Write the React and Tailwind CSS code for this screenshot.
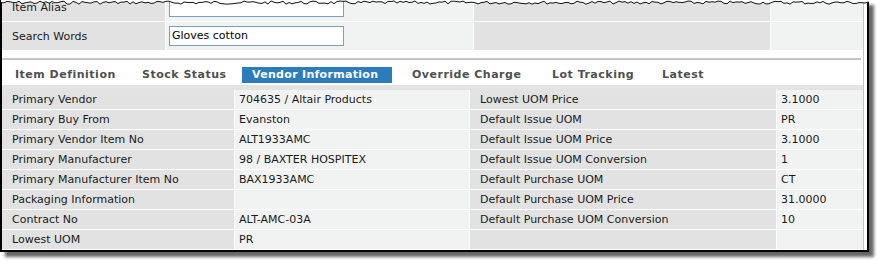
import React from 'react';

// Vendor Information tab of the item screen, clipped screenshot style
const LEFT_ROWS = [
  ['Primary Vendor', '704635 / Altair Products'],
  ['Primary Buy From', 'Evanston'],
  ['Primary Vendor Item No', 'ALT1933AMC'],
  ['Primary Manufacturer', '98 / BAXTER HOSPITEX'],
  ['Primary Manufacturer Item No', 'BAX1933AMC'],
  ['Packaging Information', ''],
  ['Contract No', 'ALT-AMC-03A'],
  ['Lowest UOM', 'PR'],
];

const RIGHT_ROWS = [
  ['Lowest UOM Price', '3.1000'],
  ['Default Issue UOM', 'PR'],
  ['Default Issue UOM Price', '3.1000'],
  ['Default Issue UOM Conversion', '1'],
  ['Default Purchase UOM', 'CT'],
  ['Default Purchase UOM Price', '31.0000'],
  ['Default Purchase UOM Conversion', '10'],
  ['', ''],
];

const TABS = [
  { name: 'Item Definition', w: 'w-[117px]' },
  { name: 'Stock Status', w: 'w-[100px]' },
  { name: 'Vendor Information', w: 'w-[150px]', active: true },
  { name: 'Override Charge', w: 'w-[130px]' },
  { name: 'Lot Tracking', w: 'w-[100px]' },
  { name: 'Latest', w: 'w-[80px]' },
];

// torn top edge of the clipping
const TORN = (() => {
  let seed = 7;
  const rnd = () => {
    seed = (seed * 9301 + 49297) % 233280;
    return seed / 233280;
  };
  const pts = [];
  for (let x = 0; x <= 869; x += 3) {
    pts.push([x, 1 + rnd() * 3.2]);
  }
  return pts;
})();

const tornLine = TORN.map(([x, y]) => `${x},${y.toFixed(1)}`).join(' ');
const tornFill = `M0,0 L${TORN.map(([x, y]) => `${x},${y.toFixed(1)}`).join(' L')} L869,0 Z`;

const Cell = ({ className = '', children }) => (
  <div className={`flex items-center pl-[10px] pt-[2px] text-[11px] text-[#1a1a1a] ${className}`}>{children}</div>
);

export default function App() {
  return (
    <div className="w-[881px] h-[266px] bg-white overflow-hidden font-['DejaVu_Sans','Verdana',sans-serif]">
      <div className="relative w-[869px] h-[252px] border-l-2 border-r-2 border-b-2 border-black shadow-[5px_5px_3px_rgba(0,0,0,0.6)] bg-white">
        {/* torn edge */}
        <svg className="absolute top-0 -left-[2px] z-10" width="871" height="6" viewBox="0 0 869 6">
          <path d={tornFill} fill="#ffffff" />
          <polyline points={tornLine} fill="none" stroke="#111" strokeWidth="1" />
        </svg>

        <div className="h-[250px] pr-[3px] overflow-hidden">
          <div className="h-full border-r border-[#c4c4c4] overflow-hidden bg-white">
            {/* header fields */}
            <div className="-mt-[7px] flex flex-col gap-px bg-white">
              {['Item Alias', 'Search Words'].map((label, i) => (
                <div key={label} className="flex h-[28px] gap-px">
                  <Cell className="w-[163px] bg-[#e2e2e2]">{label}</Cell>
                  <div className="w-[307px] bg-[#f1f3f3] flex items-center pl-[3px]">
                    <div className="w-[175px] h-[20px] border border-[#7f9db9] bg-white flex items-center pl-[2px] pt-px text-[11px] text-black">
                      {i === 1 ? 'Gloves cotton' : ''}
                    </div>
                  </div>
                  <div className="w-[296px] bg-[#e2e2e2]" />
                  <div className="flex-1 bg-[#f1f3f3]" />
                </div>
              ))}
            </div>

            <div className="h-[8px]" />
            <div className="h-[2px] mr-[2px] bg-[#c4c4c4]" />

            {/* tabs */}
            <div className="h-[25px] flex gap-[10px] pl-[3px] pt-[7px]">
              {TABS.map((t) => (
                <div
                  key={t.name}
                  className={`${t.w} h-[16px] flex items-center pl-[10px] pt-px text-[11px] font-bold whitespace-nowrap ${
                    t.active ? 'bg-[#2b7bbd] text-white tracking-[0.3px]' : 'text-[#4f4f4f] tracking-[0.5px]'
                  }`}
                >
                  {t.name}
                </div>
              ))}
            </div>
            <div className="h-[5px] bg-[#e3e3e3]" />

            {/* vendor grid */}
            <div className="flex flex-col">
              {LEFT_ROWS.map((row, i) => (
                <div key={i} className="flex h-[20px] gap-px border-b border-white bg-white">
                  <Cell className="w-[232px] bg-[#e2e2e2]">{row[0]}</Cell>
                  <Cell className="w-[234px] bg-[#f1f3f3] !pl-[4px]">{row[1]}</Cell>
                  <Cell className="w-[306px] bg-[#e2e2e2]">{RIGHT_ROWS[i][0]}</Cell>
                  <Cell className="flex-1 bg-[#f1f3f3] !pl-[4px]">{RIGHT_ROWS[i][1]}</Cell>
                </div>
              ))}
            </div>
          </div>
        </div>
      </div>
    </div>
  );
}
